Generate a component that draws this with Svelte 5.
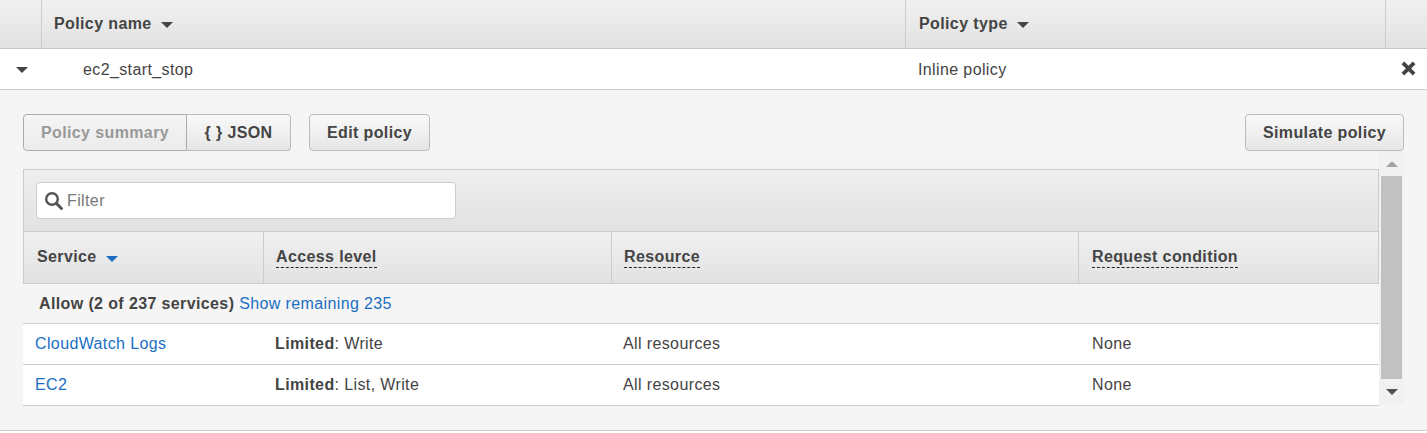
<script>
  const rows = [
    { service: 'CloudWatch Logs', access: 'Write', resource: 'All resources', condition: 'None' },
    { service: 'EC2', access: 'List, Write', resource: 'All resources', condition: 'None' }
  ];
</script>

<div class="page">
  <div class="policy-head">
    <div class="cell-toggle"></div>
    <div class="cell-name">Policy name <span class="caret"></span></div>
    <div class="cell-type">Policy type <span class="caret"></span></div>
    <div class="cell-end"></div>
  </div>

  <div class="policy-row">
    <div class="cell-toggle"><span class="caret"></span></div>
    <div class="row-name">ec2_start_stop</div>
    <div class="row-type">Inline policy</div>
    <div class="row-remove">
      <svg width="15" height="15" viewBox="0 0 14 14">
        <path d="M3 0.500 L7 4.500 L11 0.500 L13.500 3 L9.500 7 L13.500 11 L11 13.500 L7 9.500 L3 13.500 L0.500 11 L4.500 7 L0.500 3 Z" fill="#444" />
      </svg>
    </div>
  </div>

  <div class="panel">
    <div class="toolbar">
      <div class="btn-group">
        <button class="btn active">Policy summary</button>
        <button class="btn json">{'{ }'} JSON</button>
      </div>
      <button class="btn edit">Edit policy</button>
      <button class="btn simulate">Simulate policy</button>
    </div>

    <div class="content">
      <div class="table">
        <div class="filter-bar">
          <div class="filter">
            <svg width="20" height="20" viewBox="0 0 20 20">
              <circle cx="8" cy="8" r="5.800" fill="none" stroke="#555" stroke-width="2.400" />
              <path d="M12.500 12.500 L17.500 17.500" stroke="#555" stroke-width="3" stroke-linecap="round" />
            </svg>
            <span>Filter</span>
          </div>
        </div>

        <div class="grid head">
          <div class="th">Service <span class="caret blue"></span></div>
          <div class="th"><span class="dashed">Access level</span></div>
          <div class="th"><span class="dashed">Resource</span></div>
          <div class="th"><span class="dashed">Request condition</span></div>
        </div>

        <div class="allow"><b>Allow (2 of 237 services)</b> <a href="#top">Show remaining 235</a></div>

        {#each rows as row}
          <div class="grid body">
            <div class="td"><a href="#top">{row.service}</a></div>
            <div class="td"><b>Limited</b>: {row.access}</div>
            <div class="td">{row.resource}</div>
            <div class="td">{row.condition}</div>
          </div>
        {/each}
      </div>

      <div class="scrollbar">
        <span class="arrow up"></span>
        <div class="thumb"></div>
        <span class="arrow down"></span>
      </div>
    </div>
  </div>
</div>

<style>
  :global(body) {
    margin: 0;
    background-color: #ffffff;
  }

  .page {
    font-family: "Liberation Sans", Arial, sans-serif;
    font-size: 16px;
    letter-spacing: 0.38px;
    color: #444444;
    width: 1427px;
    overflow: hidden;
  }

  .policy-head {
    display: flex;
    height: 48px;
    border-bottom: 1px solid #c8c8c8;
    background: linear-gradient(#f0f0f0, #e2e2e2);
    font-weight: 700;
    line-height: 48px;
  }

  .policy-head .cell-toggle {
    width: 41px;
    border-right: 1px solid #cccccc;
  }

  .cell-name {
    width: 851px;
    padding-left: 12px;
    border-right: 1px solid #cccccc;
  }

  .cell-type {
    width: 466px;
    padding-left: 13px;
    border-right: 1px solid #cccccc;
  }

  .cell-end {
    flex: 1;
  }

  .caret {
    display: inline-block;
    width: 0;
    height: 0;
    margin-left: 5px;
    vertical-align: 1px;
    border-left: 6px solid transparent;
    border-right: 6px solid transparent;
    border-top: 6px solid #444444;
  }

  .caret.blue {
    border-top-color: #1b6ec2;
    vertical-align: 0;
  }

  .policy-row {
    display: flex;
    align-items: center;
    padding-top: 1px;
    box-sizing: border-box;
    height: 41px;
    border-bottom: 1px solid #cccccc;
    background-color: #ffffff;
  }

  .policy-row .cell-toggle {
    width: 83px;
    padding-left: 11px;
    box-sizing: border-box;
  }

  .policy-row .caret {
    display: block;
  }

  .row-name {
    width: 835px;
  }

  .row-type {
    width: 483px;
  }

  .row-remove {
    display: flex;
    margin-top: -2px;
  }

  .panel {
    height: 341px;
    box-sizing: border-box;
    border-bottom: 1px solid #cccccc;
    padding: 24px 23px 0;
    background-color: #f5f5f5;
  }

  .toolbar {
    display: flex;
    height: 37px;
  }

  .btn-group {
    display: flex;
  }

  .btn {
    height: 37px;
    padding: 0;
    border: 1px solid #bbbbbb;
    border-radius: 4px;
    background: linear-gradient(#f9f9f9, #e6e6e6);
    font-family: inherit;
    font-size: 16px;
    font-weight: 700;
    letter-spacing: inherit;
    color: #444444;
  }

  .btn.active {
    width: 164px;
    border-color: #aaaaaa;
    border-radius: 4px 0 0 4px;
    background: linear-gradient(#f5f5f5, #ebebeb);
    color: #999999;
  }

  .btn.json {
    width: 105px;
    margin-left: -1px;
    border-left-color: #aaaaaa;
    border-radius: 0 4px 4px 0;
  }

  .btn.edit {
    width: 121px;
    margin-left: 18px;
  }

  .btn.simulate {
    width: 159px;
    margin-left: auto;
  }

  .content {
    display: flex;
    height: 254px;
  }

  .table {
    width: 1356px;
    margin-top: 18px;
  }

  .filter-bar {
    height: 61px;
    border: 1px solid #cccccc;
    background: linear-gradient(#efefef, #e2e2e2);
    padding-left: 12px;
    display: flex;
    align-items: center;
  }

  .filter {
    display: flex;
    align-items: center;
    gap: 3px;
    width: 420px;
    height: 37px;
    margin-top: -1px;
    padding-left: 7px;
    padding-top: 1px;
    box-sizing: border-box;
    border: 1px solid #cccccc;
    border-radius: 4px;
    background-color: #ffffff;
    color: #777777;
  }

  .grid {
    display: grid;
    grid-template-columns: 240px 348px 467px 1fr;
  }

  .head {
    height: 51px;
    border: 1px solid #cccccc;
    border-top: none;
    background: linear-gradient(#f0f0f0, #e2e2e2);
    font-weight: 700;
    line-height: 49px;
  }

  .th {
    padding-left: 12px;
    border-right: 1px solid #cccccc;
  }

  .th:first-child,
  .th:last-child {
    padding-left: 13px;
  }

  .th:last-child {
    border-right: none;
  }

  .dashed {
    display: inline-block;
    line-height: 20px;
    border-bottom: 1px dashed #222222;
  }

  .allow {
    height: 39px;
    padding-left: 16px;
    border-bottom: 1px solid #cccccc;
    line-height: 40px;
  }

  a {
    color: #1b6ec2;
    text-decoration: none;
  }

  .body {
    height: 40px;
    border-bottom: 1px solid #cccccc;
    background-color: #ffffff;
    line-height: 40px;
  }

  .td {
    padding-left: 12px;
  }

  .td:last-child {
    padding-left: 14px;
  }

  .scrollbar {
    display: flex;
    flex-direction: column;
    align-items: center;
    width: 25px;
    height: 254px;
    background-color: #f1f1f1;
  }

  .thumb {
    width: 21px;
    height: 204px;
    background-color: #c1c1c1;
  }

  .arrow {
    display: block;
    width: 0;
    height: 0;
    border-left: 6px solid transparent;
    border-right: 6px solid transparent;
  }

  .arrow.up {
    margin: 10px 0 9px;
    border-bottom: 6px solid #a3a3a3;
  }

  .arrow.down {
    margin: 10px 0;
    border-top: 6px solid #505050;
  }
</style>
